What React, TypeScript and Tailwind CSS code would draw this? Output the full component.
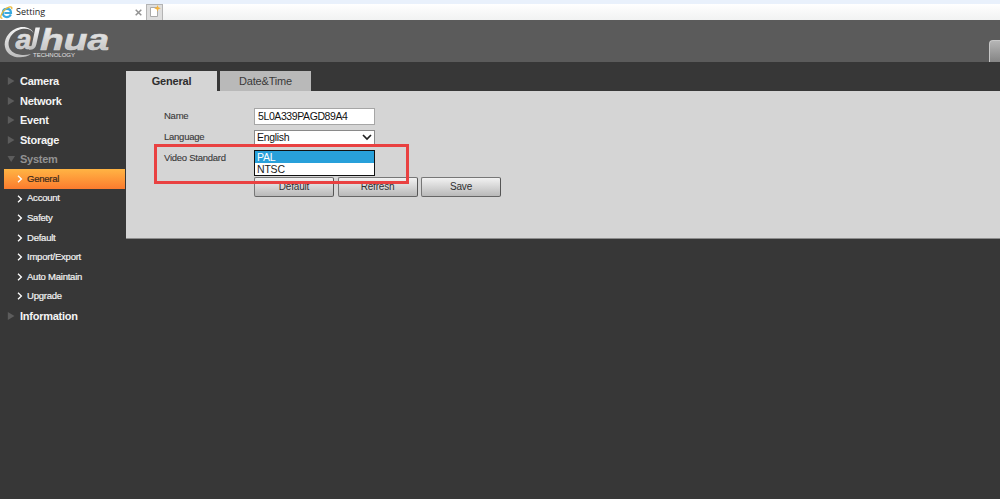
import { clsx } from "clsx";

type MenuItem = {
  name: string;
  open?: boolean;
  children?: string[];
};

const menu: MenuItem[] = [
  { name: "Camera" },
  { name: "Network" },
  { name: "Event" },
  { name: "Storage" },
  {
    name: "System",
    open: true,
    children: [
      "General",
      "Account",
      "Safety",
      "Default",
      "Import/Export",
      "Auto Maintain",
      "Upgrade",
    ],
  },
  { name: "Information" },
];

const standards = ["PAL", "NTSC"];

function BrowserIcon() {
  return (
    <svg className="h-[13px] w-[13px] shrink-0" viewBox="0 0 13 13" fill="none">
      <path
        d="M10.9 8.6C10 10.300 8.600 11.100 6.900 11.100 4.500 11.100 2.800 9.400 2.800 7S4.500 2.900 6.900 2.900 11 4.600 11 7H4.400"
        stroke="#38a9e0"
        strokeWidth="2.2"
      />
      <path
        d="M2.400 12.100C.600 12.600.200 11 1.400 8.400 3 5 6.800 1.600 9.800.9c1.900-.4 2.400.7 1.800 2.300"
        stroke="#e9b93c"
        strokeWidth="1.3"
      />
    </svg>
  );
}

function BrowserBar() {
  return (
    <div className="h-5 bg-[#e9f1fc] pt-1">
      <div className="flex h-4 bg-gradient-to-b from-white to-[#f1f2f2]">
        <div className="flex w-[146px] items-center bg-white pr-1">
          <BrowserIcon />
          <span className="ml-[3px] font-['Open_Sans',sans-serif] text-[9px] leading-4 text-[#222]">
            Setting
          </span>
          <svg className="ml-auto h-[7px] w-[7px]" viewBox="0 0 7 7">
            <path d="M.7.7l5.600 5.600M6.300.7L.7 6.300" stroke="#929292" strokeWidth="1.500" />
          </svg>
        </div>
        <div className="flex w-[17px] justify-center border border-b-0 border-[#b4b4b4] bg-[#dedede]">
          <svg className="h-[14px] w-[13px]" viewBox="0 0 13 14">
            <path d="M2.500 2.500h7v9h-7z" fill="#fff" stroke="#aaa" />
            <path
              d="M9.500 0l.9 2.300 2.400.9-2.400 1-.9 2.300-.9-2.300L6.200 3.200l2.400-.9z"
              fill="#f3b33e"
            />
          </svg>
        </div>
      </div>
    </div>
  );
}

function Logo() {
  return (
    <svg className="h-[42px] w-[120px]" viewBox="0 0 120 42">
      <defs>
        <linearGradient id="silver" x1="0" y1="0" x2="0" y2="1">
          <stop offset="0" stopColor="#f4f4f4" />
          <stop offset="1" stopColor="#bdbdbd" />
        </linearGradient>
      </defs>
      <path
        d="M33.500 13C31.500 8 23.500 5 15.500 8.700 8 12.200 3.500 20 5 27c1.400 7 8 10.500 15 10.300 4-.1 8-1.200 11-3.300-4 1.200-7.400 1.300-10.600.8C14 34 9.200 30.500 8.600 25 8 19 12 12.700 18 10.200 24.500 7.500 31 8.700 33.500 13z"
        fill="url(#silver)"
      />
      <text
        x="15.500"
        y="29"
        fontSize="28"
        textLength="16"
        lengthAdjust="spacingAndGlyphs"
        fill="url(#silver)"
        stroke="#d8d8d8"
        strokeWidth="0.600"
        className="font-['Liberation_Sans',sans-serif] font-bold italic"
      >
        a
      </text>
      <path
        d="M35.500 7.500h4.500l-3.700 17c-1 4.200-3.600 5.700-7.400 5.300l.7-3c1.300 0 1.900-.7 2.400-2.600z"
        fill="url(#silver)"
      />
      <text
        x="40"
        y="29.500"
        fontSize="29"
        textLength="69"
        lengthAdjust="spacingAndGlyphs"
        fill="url(#silver)"
        stroke="#d8d8d8"
        strokeWidth="0.600"
        className="font-['Liberation_Sans',sans-serif] font-bold italic"
      >
        hua
      </text>
      <text
        x="33"
        y="37.300"
        fontSize="6"
        textLength="42"
        lengthAdjust="spacingAndGlyphs"
        fill="#e2e2e2"
        className="font-['Liberation_Sans',sans-serif]"
      >
        TECHNOLOGY
      </text>
    </svg>
  );
}

function SubItem({ name, active }: { name: string; active: boolean }) {
  return (
    <li
      className={clsx(
        "ml-1 flex h-[19.55px] w-[121px] items-center pl-[13px] text-[9.5px] tracking-[-0.23px] [-webkit-text-stroke:0.2px]",
        active
          ? "bg-gradient-to-b from-[#ffb444] to-[#fb7b2e] text-[#3c2a1c]"
          : "text-[#f2f2f2]"
      )}
    >
      <svg className="mr-1 h-2 w-[6px]" viewBox="0 0 6 8" fill="none">
        <path d="M1 .800l3.400 3.200L1 7.200" stroke="#fff" strokeWidth="1.300" />
      </svg>
      {name}
    </li>
  );
}

function Sidebar() {
  return (
    <ul className="w-[126px] shrink-0 pt-[9.5px]">
      {menu.map((item) => (
        <li key={item.name}>
          <div
            className={clsx(
              "flex h-[19.55px] items-center pl-[7px] text-[11px] font-bold tracking-[-0.25px]",
              item.open ? "text-[#929292]" : "text-[#f4f4f4]"
            )}
          >
            <svg className="mr-[5px] h-2 w-2" viewBox="0 0 8 8">
              <path
                d={item.open ? "M.5 1h7.500L4.200 7z" : "M.8 0v8L7.500 4z"}
                fill="#5c5c5c"
              />
            </svg>
            {item.name}
          </div>
          {item.children && (
            <ul>
              {item.children.map((child) => (
                <SubItem key={child} name={child} active={child === "General"} />
              ))}
            </ul>
          )}
        </li>
      ))}
    </ul>
  );
}

function Button({ label }: { label: string }) {
  return (
    <button className="h-5 w-20 rounded-[2px] border border-[#777] border-r-[#555] border-b-[#666] bg-gradient-to-b from-[#f2f2f2] to-[#b9b9b9] text-[10px] leading-[18px] tracking-[-0.2px] text-[#303030]">
      {label}
    </button>
  );
}

function Label({ text }: { text: string }) {
  return (
    <span className="w-[90px] text-[9.5px] tracking-[-0.25px] text-[#383838] [-webkit-text-stroke:0.1px]">
      {text}
    </span>
  );
}

function GeneralForm() {
  return (
    <div className="relative h-[148px] border-b border-[#8c8c8c] bg-[#d5d5d5] pt-4 pl-[38px]">
      <div className="flex h-[18px] items-center">
        <Label text="Name" />
        <div className="h-[17px] w-[121px] border border-[#a6a6a6] bg-white pl-[3px] text-[10.5px] leading-[15px] tracking-[-0.4px] text-[#111]">
          5L0A339PAGD89A4
        </div>
      </div>
      <div className="mt-1 flex h-4 items-center">
        <Label text="Language" />
        <div className="flex h-[15px] w-[121px] items-center justify-between border border-[#8a8a8a] bg-white pr-[2px] pl-[2px] text-[10.5px] leading-[13px] tracking-[-0.3px] text-[#111]">
          English
          <svg className="h-[7px] w-[10px]" viewBox="0 0 10 7" fill="none">
            <path d="M1 1l4 4 4-4" stroke="#222" strokeWidth="1.700" />
          </svg>
        </div>
      </div>
      <div className="mt-[5px] flex h-[27px]">
        <div className="flex h-[17px] items-center">
          <Label text="Video Standard" />
        </div>
        <ul className="h-[26px] w-[121px] border border-[#111] bg-white">
          {standards.map((s, i) => (
            <li
              key={s}
              className={clsx(
                "h-3 pl-[2px] text-[10.5px] leading-3 tracking-[-0.2px]",
                i === 0 ? "bg-[#28a0da] text-white" : "text-[#222]"
              )}
            >
              {s}
            </li>
          ))}
        </ul>
      </div>
      <div className="ml-[90px] flex gap-[3.5px]">
        <Button label="Default" />
        <Button label="Refresh" />
        <Button label="Save" />
      </div>
      {/* highlighted area around the video standard */}
      <div className="absolute top-[53px] left-[28px] h-[40px] w-[255px] border-3 border-[#e94141]" />
    </div>
  );
}

export default function App() {
  return (
    <div className="h-[499px] w-[1000px] overflow-hidden bg-[#373737] font-['Liberation_Sans',Arial,sans-serif]">
      <BrowserBar />
      <header className="flex h-[42px] items-end justify-between bg-[#5b5b5b]">
        <Logo />
        <div className="h-[22px] w-[11px] rounded-tl-[4px] border-t border-l border-[#c8c8c8] bg-gradient-to-b from-[#b5b5b5] to-[#858585]" />
      </header>
      <div className="flex">
        <Sidebar />
        <main className="min-w-0 flex-1 pt-[9px]">
          <div className="flex h-5 gap-[3px] text-center text-[11px] leading-[21px] tracking-[-0.2px]">
            <div className="w-[91px] bg-[#d5d5d5] font-bold text-[#2e2e2e]">
              General
            </div>
            <div className="w-[91px] bg-[#b9b9b9] text-[#3a3a3a]">
              Date&amp;Time
            </div>
          </div>
          <GeneralForm />
        </main>
      </div>
    </div>
  );
}
